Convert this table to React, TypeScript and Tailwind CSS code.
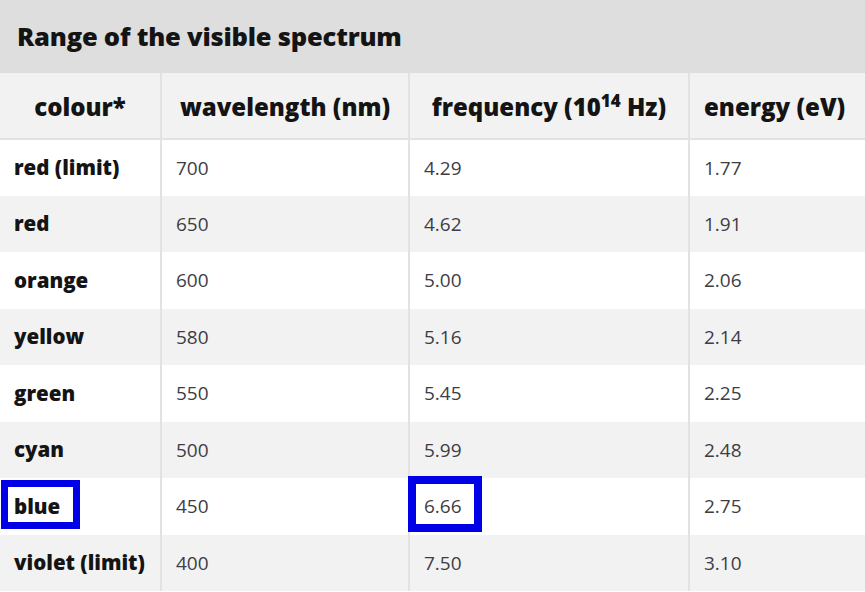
import React from "react";

const rows = [
  { colour: "red (limit)", wl: "700", freq: "4.29", ev: "1.77" },
  { colour: "red", wl: "650", freq: "4.62", ev: "1.91" },
  { colour: "orange", wl: "600", freq: "5.00", ev: "2.06" },
  { colour: "yellow", wl: "580", freq: "5.16", ev: "2.14" },
  { colour: "green", wl: "550", freq: "5.45", ev: "2.25" },
  { colour: "cyan", wl: "500", freq: "5.99", ev: "2.48" },
  { colour: "blue", wl: "450", freq: "6.66", ev: "2.75", mark: true },
  { colour: "violet (limit)", wl: "400", freq: "7.50", ev: "3.10" },
];

export default function App() {
  return (
    <div className="w-[865px] h-[592px] overflow-hidden bg-white font-['Open_Sans','Noto_Sans',sans-serif]">
      <div className="h-[73px] bg-[#dedede] pl-[17px] flex items-center text-[25.5px] font-extrabold text-[#141414] tracking-[-0.2px]">
        Range of the visible spectrum
      </div>
      <table className="table-fixed border-collapse w-[880px]">
        <colgroup>
          <col className="w-[161px]" />
          <col className="w-[248px]" />
          <col className="w-[280px]" />
          <col />
        </colgroup>
        <thead>
          <tr className="h-[66px] bg-[#f2f2f2] border-b-2 border-[#e2e2e2]">
            <th className="text-center text-[24px] font-extrabold text-[#141414] px-[8px] pt-[2px]">colour*</th>
            <th className="text-center text-[24px] font-extrabold text-[#141414] px-[8px] pt-[2px] border-l-2 border-[#e2e2e2] whitespace-nowrap">
              wavelength (nm)
            </th>
            <th className="text-center text-[24px] font-extrabold text-[#141414] px-[6px] pt-[2px] border-l-2 border-[#e2e2e2] whitespace-nowrap">
              frequency (10<sup className="text-[17px] relative -top-[9px] leading-none">14</sup> Hz)
            </th>
            <th className="text-left text-[24px] font-extrabold text-[#141414] pl-[14px] pt-[2px] border-l-2 border-[#e2e2e2] whitespace-nowrap">
              energy (eV)
            </th>
          </tr>
        </thead>
        <tbody>
          {rows.map((r, i) => (
            <tr key={r.colour} className={`h-[56.5px] ${i % 2 === 0 ? "bg-white" : "bg-[#f2f2f2]"}`}>
              <td className="relative pl-[14px] text-[20.5px] font-extrabold text-[#141414] whitespace-nowrap">
                {r.colour}
                {r.mark && (
                  <span className="absolute left-[1px] top-[2px] w-[79px] h-[49px] border-[7px] border-[#0000e6]" />
                )}
              </td>
              <td className="pl-[14px] text-[19px] text-[#3d3d45] border-l-2 border-[#e2e2e2]">{r.wl}</td>
              <td className="relative pl-[14px] text-[19px] text-[#3d3d45] border-l-2 border-[#e2e2e2]">
                {r.freq}
                {r.mark && (
                  <span className="absolute -left-[2px] -top-[2px] w-[74px] h-[56px] border-[8px] border-[#0000e6]" />
                )}
              </td>
              <td className="pl-[14px] text-[19px] text-[#3d3d45] border-l-2 border-[#e2e2e2]">{r.ev}</td>
            </tr>
          ))}
        </tbody>
      </table>
    </div>
  );
}
